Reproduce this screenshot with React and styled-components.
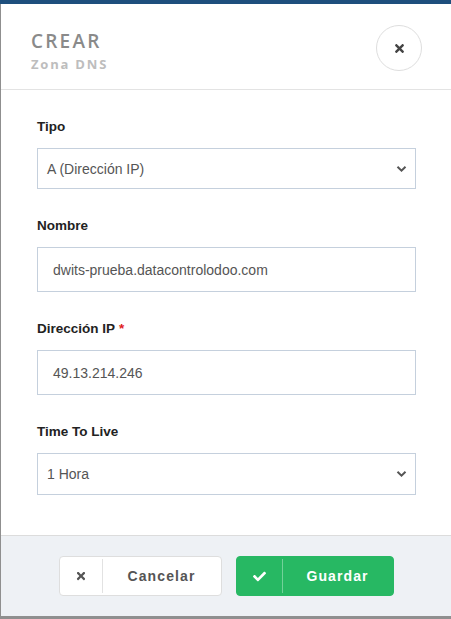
import React from 'react';
import styled, { createGlobalStyle } from 'styled-components';
import { FaTimes, FaCheck } from 'react-icons/fa';

const GlobalStyle = createGlobalStyle`
  html, body {
    margin: 0;
    padding: 0;
    background: #8f8f8f;
    font-family: 'Liberation Sans', Arial, sans-serif;
  }
`;

const Page = styled.div`
  display: flex;
  flex-direction: column;
  height: 619px;
  overflow: hidden;
`;

const TopStrip = styled.div`
  height: 4px;
  background: #1e4f7d;
  flex-shrink: 0;
`;

const Modal = styled.div`
  margin-left: 1px;
  height: 612px;
  background: #fff;
  display: flex;
  flex-direction: column;
  flex-shrink: 0;
`;

const Header = styled.header`
  display: flex;
  justify-content: space-between;
  align-items: flex-start;
  padding: 20px 29px 0 30px;
  height: 86px;
  box-sizing: border-box;
  border-bottom: 1px solid #e3e3e3;
  flex-shrink: 0;
`;

const Titles = styled.div`
  display: flex;
  flex-direction: column;
  padding-top: 5px;
`;

const Title = styled.h1`
  margin: 0;
  font-family: 'Open Sans', sans-serif;
  font-weight: 600;
  font-size: 19px;
  line-height: 24px;
  letter-spacing: 2.2px;
  color: #8a8a8a;
`;

const Subtitle = styled.div`
  font-family: 'Open Sans', sans-serif;
  font-weight: 700;
  font-size: 13px;
  line-height: 20px;
  letter-spacing: 1.8px;
  color: #bdbdbd;
  margin-top: 1px;
`;

const CloseButton = styled.button`
  width: 46px;
  height: 46px;
  border-radius: 50%;
  border: 1px solid #dedede;
  background: #fff;
  display: flex;
  align-items: center;
  justify-content: center;
  color: #444;
  padding: 0;
  margin-top: 1px;
  cursor: pointer;
`;

const Body = styled.div`
  flex: 1;
  padding: 27px 35px 0 36px;
  display: flex;
  flex-direction: column;
  gap: 27px;
`;

const Group = styled.div`
  display: flex;
  flex-direction: column;
  gap: 11px;
`;

const Label = styled.label`
  font-size: 13.5px;
  font-weight: 700;
  line-height: 20px;
  color: #222;
`;

const Required = styled.span`
  color: #e02222;
  margin-left: 4px;
`;

const Field = styled.div`
  height: ${p => p.$h}px;
  box-sizing: border-box;
  border: 1px solid #c5d0dd;
  display: flex;
  align-items: center;
  justify-content: space-between;
  padding: 0 8px 0 ${p => p.$pad}px;
  font-size: 14px;
  color: #555;
  background: #fff;
`;

const Footer = styled.footer`
  flex-shrink: 0;
  height: 81px;
  box-sizing: border-box;
  background: #eef1f5;
  border-top: 1px solid #dcdcdc;
  display: flex;
  justify-content: center;
  align-items: flex-start;
  padding-top: 20px;
  gap: 14px;
`;

const Button = styled.button`
  display: flex;
  align-items: stretch;
  height: 40px;
  width: ${p => p.$w}px;
  padding: 0;
  border-radius: 4px;
  border: 1px solid ${p => (p.$primary ? '#27b863' : '#dedede')};
  background: ${p => (p.$primary ? '#27b863' : '#fff')};
  color: ${p => (p.$primary ? '#fff' : '#555')};
  font-family: 'Liberation Sans', Arial, sans-serif;
  font-size: 14px;
  font-weight: 700;
  letter-spacing: 1.1px;
  cursor: pointer;
  overflow: hidden;
`;

const ButtonIcon = styled.span`
  width: ${p => p.$w}px;
  display: flex;
  align-items: center;
  justify-content: center;
  border-right: 1px solid ${p => (p.$primary ? 'rgba(255,255,255,0.35)' : '#e2e2e2')};
  margin: 2px 0;
`;

const ButtonText = styled.span`
  flex: 1;
  display: flex;
  align-items: center;
  justify-content: center;
`;

const Chevron = () => (
  <svg width="11" height="8" viewBox="0 0 11 8">
    <path d="M1.5 1.8 L5.5 5.6 L9.5 1.8" fill="none" stroke="#555" strokeWidth="2" />
  </svg>
);

export default function App() {
  return (
    <>
      <GlobalStyle />
      <Page>
        <TopStrip />
        <Modal>
          <Header>
            <Titles>
              <Title>CREAR</Title>
              <Subtitle>Zona DNS</Subtitle>
            </Titles>
            <CloseButton aria-label="Cerrar">
              <FaTimes size={13} />
            </CloseButton>
          </Header>
          <Body>
            <Group>
              <Label>Tipo</Label>
              <Field $h={41} $pad={9}>
                <span>A (Dirección IP)</span>
                <Chevron />
              </Field>
            </Group>
            <Group>
              <Label>Nombre</Label>
              <Field $h={45} $pad={15}>dwits-prueba.datacontrolodoo.com</Field>
            </Group>
            <Group>
              <Label>
                Dirección IP<Required>*</Required>
              </Label>
              <Field $h={45} $pad={15}>49.13.214.246</Field>
            </Group>
            <Group>
              <Label>Time To Live</Label>
              <Field $h={42} $pad={9}>
                <span>1 Hora</span>
                <Chevron />
              </Field>
            </Group>
          </Body>
          <Footer>
            <Button $w={163}>
              <ButtonIcon $w={42}>
                <FaTimes size={12} />
              </ButtonIcon>
              <ButtonText>Cancelar</ButtonText>
            </Button>
            <Button $w={158} $primary>
              <ButtonIcon $w={45} $primary>
                <FaCheck size={13} />
              </ButtonIcon>
              <ButtonText>Guardar</ButtonText>
            </Button>
          </Footer>
        </Modal>
      </Page>
    </>
  );
}
